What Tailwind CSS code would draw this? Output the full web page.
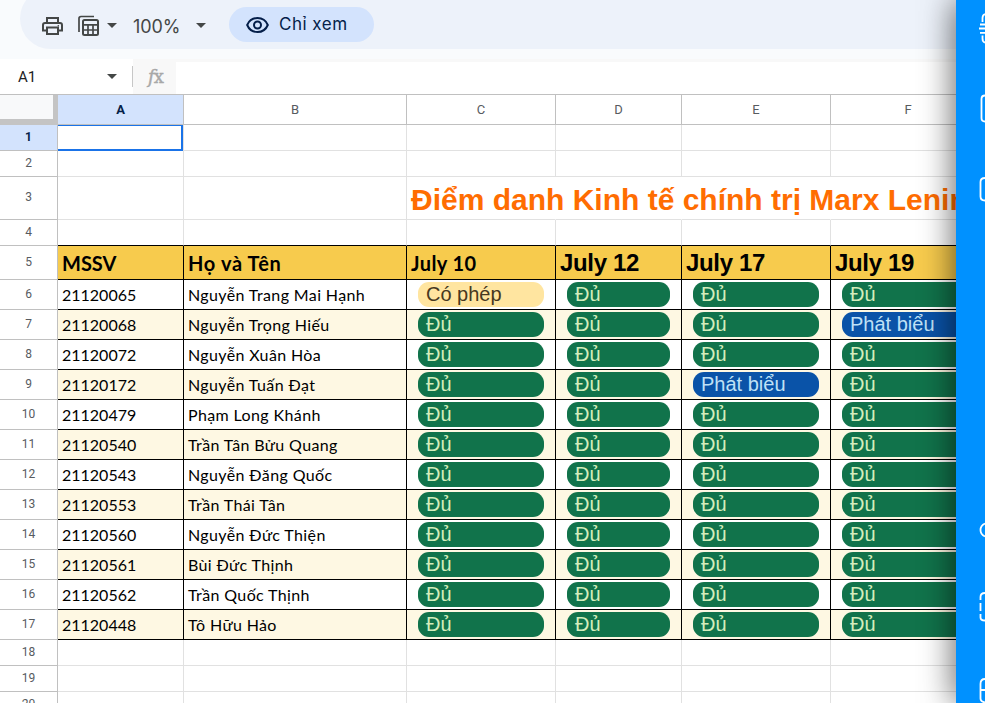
<!DOCTYPE html>
<html lang="vi">
<head>
<meta charset="utf-8">
<title>Điểm danh</title>
<script src="https://cdn.jsdelivr.net/npm/@tailwindcss/browser@4"></script>
</head>
<body class="h-[703px] w-[985px] overflow-hidden bg-white font-['Liberation_Sans',sans-serif]">
<div class="relative h-[703px] w-[985px] overflow-hidden">
<div class="flex h-[703px] w-[985px] flex-col overflow-hidden">
  <header class="h-[59px] shrink-0 bg-[#f9fbfd]">
    <div class="-mt-3 ml-5 flex h-[61px] items-center rounded-l-[31px] bg-[#edf2fa] pt-[14px] pl-[20px] text-[#444746]">
      <svg class="size-6 shrink-0" viewBox="0 0 24 24" fill="none" stroke="currentColor" stroke-width="2"><path d="M7 8V4h11v4M6.500 16.500H3V11a2 2 0 0 1 2-2h15a2 2 0 0 1 2 2v5.500h-3.500M7 13.500h11v6.500H7z"/><circle cx="18.300" cy="11.700" r=".8" fill="currentColor" stroke="none"/></svg>
      <svg class="ml-3 size-6 shrink-0" viewBox="0 0 24 24" fill="none" stroke="currentColor" stroke-width="2"><path d="M3 18V4.500a2 2 0 0 1 2-2h13" stroke-width="1.700"/><rect x="7" y="6" width="15" height="15" rx="1.500"/><path d="M7 10.800h15M7 16h15M12 11v10M17 11v10" stroke-width="1.700"/></svg>
      <svg class="ml-[7px] h-[5px] w-[10px] shrink-0" viewBox="0 0 10 5" fill="currentColor"><path d="M0 0h10L5 5z"/></svg>
      <span class="ml-[16px] w-[50px] pt-px font-['Inter',sans-serif] text-[18px] tracking-[-0.1px] whitespace-nowrap">100%</span>
      <svg class="ml-[13px] h-[5px] w-[10px] shrink-0" viewBox="0 0 10 5" fill="currentColor"><path d="M0 0h10L5 5z"/></svg>
      <div class="ml-[23px] flex h-[35px] w-[145px] -translate-y-px items-center rounded-full bg-[#d3e3fd] pl-[17px] text-[#041e49]">
        <svg class="h-[18px] w-[23px] shrink-0" viewBox="0 0 23 18" fill="none" stroke="currentColor" stroke-width="2"><path d="M1.200 9C3 4.700 7 2 11.500 2s8.500 2.700 10.300 7c-1.800 4.300-5.800 7-10.300 7S3 13.300 1.200 9z"/><circle cx="11.500" cy="9" r="3.500"/></svg>
        <span class="ml-[10px] font-['Inter',sans-serif] text-[17px] tracking-[0.5px] whitespace-nowrap">Chỉ xem</span>
      </div>
    </div>
  </header>
  <div class="flex h-[35px] shrink-0 bg-white">
    <div class="flex w-[133px] items-center justify-between pr-4 pl-[18px] text-[#202124]">
      <span class="pt-px font-['Roboto',sans-serif] text-[15px]">A1</span>
      <svg class="h-[5px] w-[10px] text-[#444746]" viewBox="0 0 10 5" fill="currentColor"><path d="M0 0h10L5 5z"/></svg>
    </div>
    <div class="flex w-[43px] items-center bg-[#f8f8f8]">
      <i class="h-[21px] w-px -translate-x-px bg-[#c7c7c7]"></i>
      <span class="ml-[14px] font-['DejaVu_Serif',serif] text-[18px] tracking-[-1px] text-[#a8a8a8] [-webkit-text-stroke:0.4px]"><em>f</em>x</span>
    </div>
    <div class="h-[3px] flex-1 bg-[#f8f8f8]"></div>
  </div>
  <div id="heads" class="grid h-[31px] shrink-0 grid-cols-[58px_126px_223px_149px_126px_149px_154px] border-t border-[#c0c0c0] text-[13px] text-[#575b5f]">
    <div class="border-r-5 border-b-6 border-[#c4c4c4] bg-[#f8f9fa]"></div>
  </div>
  <main id="sheet" class="flex flex-col"></main>
</div>

<aside class="absolute inset-y-0 left-[956px] z-20 w-[29px] bg-[#0091ff] shadow-[0_0_34px_rgba(0,0,0,0.7)]">
  <svg class="h-[703px] w-[29px]" viewBox="0 0 29 703" fill="none" stroke="#fff" stroke-width="1.800">
    <path d="M29 14q-2.500 1-2.500 4v4M24 24.500h5M23 28.500h6M24 32.800h5M26.500 35.500v3q0 3.500 2.500 4"/>
    <path d="M29 95.500q-3.500 0-3.500 3.500v19q0 3.500 3.500 3.500"/>
    <path d="M29 178q-4.500 0-4.500 4v14.500q0 4 4.500 4"/>
    <path d="M29 523.500q-4.500 2-4.500 6.500t4.500 6.500"/>
    <path d="M29 593q-4.500 0-4.500 4v3M24.500 603v8M24.500 614v3.500q0 3 4.500 3"/>
    <path d="M29 679q-4.500 0-4.500 5v14.500q0 3 4.500 4M24.500 690H29"/>
  </svg>
</aside>
</div>

<script>
const heads = document.getElementById('heads'), sheet = document.getElementById('sheet');
'ABCDEF'.split('').forEach((l, i) => {
  heads.insertAdjacentHTML('beforeend', `<div class="flex items-center justify-center border-b border-[#c0c0c0] font-['Roboto',sans-serif] ${i ? '' : 'bg-[#d3e3fd] font-bold text-[#041e49]'} ${i === 5 ? '' : 'border-r'}">${l}</div>`);
});
const students = [
  ['21120065','Nguyễn Trang Mai Hạnh'],['21120068','Nguyễn Trọng Hiếu'],['21120072','Nguyễn Xuân Hòa'],
  ['21120172','Nguyễn Tuấn Đạt'],['21120479','Phạm Long Khánh'],['21120540','Trần Tân Bửu Quang'],
  ['21120543','Nguyễn Đăng Quốc'],['21120553','Trần Thái Tân'],['21120560','Nguyễn Đức Thiện'],
  ['21120561','Bùi Đức Thịnh'],['21120562','Trần Quốc Thịnh'],['21120448','Tô Hữu Hảo']];
const special = {'0,0':'Có phép','1,3':'Phát biểu','3,2':'Phát biểu'};
const tone = {'Đủ':'bg-[#11734b] text-[#d4edbc]','Có phép':'bg-[#ffe5a0] text-[#473821]','Phát biểu':'bg-[#0a53a8] text-[#bfe1f6]'};
const heights = {3:'h-[43px]',5:'h-[34px]'};
for (let r = 1; r <= 20; r++) {
  const table = r >= 5 && r <= 17, person = students[r - 6];
  const h = heights[r] || (r > 5 && r < 18 ? 'h-[30px]' : 'h-[26px]');
  let html = `<div class="grid ${h} shrink-0 grid-cols-[58px_126px_223px_149px_126px_149px_154px] grid-rows-[100%]">
    <div class="flex items-center justify-center border-r border-b border-[#c0c0c0] pb-[2px] font-['Roboto',sans-serif] text-[12px] ${r === 1 ? 'bg-[#d3e3fd] font-bold text-[#041e49]' : 'text-[#575b5f]'}">${r}</div>`;
  for (let c = 0; c < 6; c++) {
    let inner = '', cls = '';
    const side = table ? 'border-r-black' : (r === 3 && c >= 2 ? 'border-r-transparent' : 'border-r-[#e1e1e1]');
    const bottom = table || r === 4 ? 'border-b-black' : 'border-b-[#e1e1e1]';
    if (r === 1 && c === 0) inner = '<div class="absolute inset-x-0 top-0 -bottom-px border-t border-r-2 border-b-2 border-[#1a73e8]"></div>';
    if (r === 3 && c === 2) inner = '<div class="relative z-10 h-[42px] w-[578px] overflow-hidden pl-1 text-[30px] leading-[46px] font-bold whitespace-nowrap text-[#ff6d01]">Điểm danh Kinh tế chính trị Marx Lenin</div>';
    if (r === 5) {
      cls = 'bg-[#f7cb4d]';
      inner = c < 3
        ? `<div class="pl-1 font-['Lato',sans-serif] text-[20px] leading-[35px] font-bold whitespace-nowrap ${['','tracking-[0.65px]','tracking-[0.4px]'][c]}">${['MSSV','Họ và Tên','July 10'][c]}</div>`
        : `<div class="pl-1 text-[24px] leading-[33px] font-bold tracking-[-0.35px] whitespace-nowrap">${['July 12','July 17','July 19'][c - 3]}</div>`;
    }
    if (person) {
      cls = r % 2 ? 'bg-[#fef8e3]' : 'bg-white';
      if (c < 2) inner = `<div class="pl-1 font-['Lato',sans-serif] text-[16px] leading-[29px] whitespace-nowrap ${c ? 'tracking-[0.38px]' : ''}">${person[c]}</div>`;
      else {
        const v = special[(r - 6) + ',' + (c - 2)] || 'Đủ';
        inner = `<div class="mt-[2.3px] ml-[11px] h-[24.4px] ${c === 5 ? 'mr-0 rounded-l-[11px]' : 'mr-[11px] rounded-[11px]'} pl-2 text-[20px] leading-[24px] whitespace-nowrap ${tone[v]}">${v}</div>`;
      }
    }
    html += `<div class="relative flow-root min-w-0 border-r border-b ${side} ${bottom} ${cls}">${inner}</div>`;
  }
  sheet.insertAdjacentHTML('beforeend', html + '</div>');
}
</script>
</body>
</html>
